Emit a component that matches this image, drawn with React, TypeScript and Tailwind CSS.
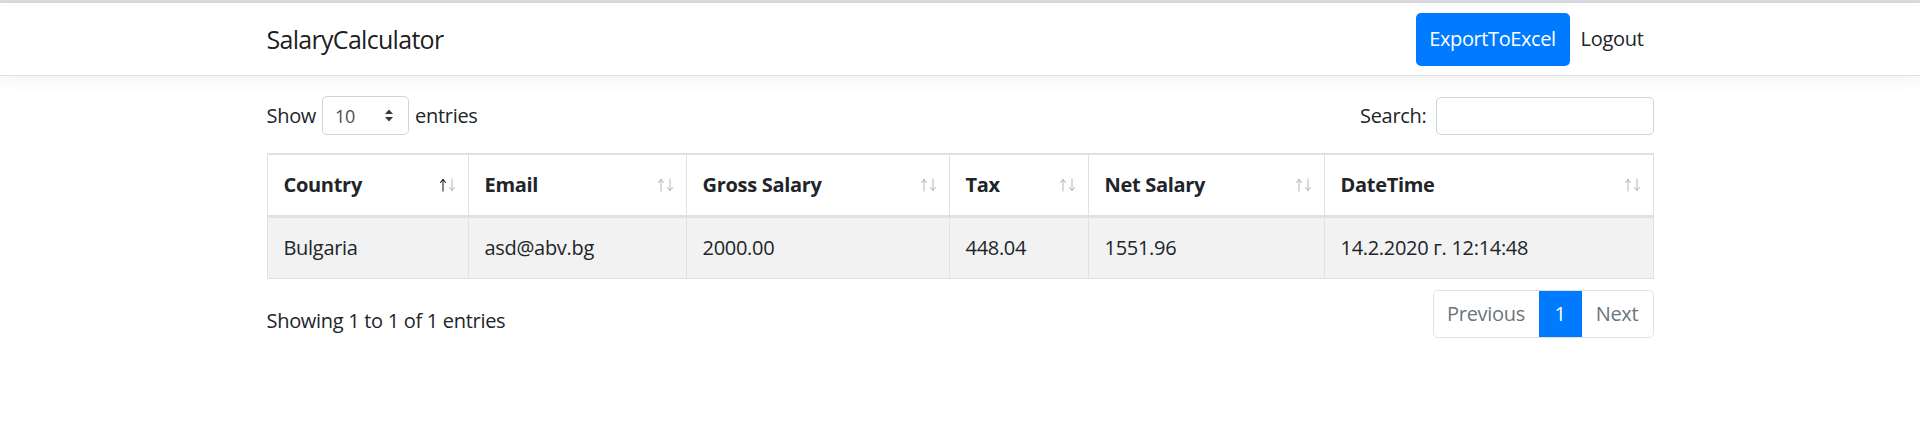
import React from "react";

const columns = [
  { label: "Country", width: "w-[201px]", active: true },
  { label: "Email", width: "w-[218px]", active: false },
  { label: "Gross Salary", width: "w-[263px]", active: false },
  { label: "Tax", width: "w-[139px]", active: false },
  { label: "Net Salary", width: "w-[236px]", active: false },
  { label: "DateTime", width: "w-[329px]", active: false },
];

const rows = [
  ["Bulgaria", "asd@abv.bg", "2000.00", "448.04", "1551.96", "14.2.2020 г. 12:14:48"],
];

function SortArrows({ active }: { active: boolean }) {
  return (
    <svg width="18" height="14" viewBox="0 0 18 14" fill="none" className="shrink-0">
      <g stroke="#212529" strokeWidth="1.1" strokeLinecap="round" strokeLinejoin="round">
        <g opacity={active ? 1 : 0.3}>
          <line x1="4" y1="13" x2="4" y2="1.5" />
          <polyline points="1.5,4.5 4,1.5 6.5,4.5" />
        </g>
        <g opacity="0.3">
          <line x1="13" y1="1" x2="13" y2="12.5" />
          <polyline points="10.5,9.5 13,12.5 15.5,9.5" />
        </g>
      </g>
    </svg>
  );
}

export default function App() {
  return (
    <div className="min-h-[426px] bg-white font-['Open_Sans',sans-serif] text-[20px] tracking-[-0.3px] text-[#212529]">
      {/* Navbar */}
      <div className="h-[3px] bg-[#dadbe0]" />
      <nav className="h-[73px] border-b border-[#dee2e6] bg-white shadow-[0_5px_15px_rgba(0,0,0,0.05)]">
        <div className="mx-auto flex h-full w-[1387px] items-center justify-between">
          <span className="text-[25px] leading-[37px] tracking-[-0.7px] text-black/90">SalaryCalculator</span>
          <div className="flex items-center">
            <button className="flex h-[53px] w-[154px] items-center justify-center rounded-[5px] bg-[#007bff] text-[20px] tracking-[-0.4px] text-white">
              ExportToExcel
            </button>
            <a className="ml-[11px] pr-[10px] text-[20px] text-[#212529]">Logout</a>
          </div>
        </div>
      </nav>

      <main className="mx-auto w-[1387px] pt-[20px]">
        {/* Length + search */}
        <div className="flex items-center justify-between">
          <label className="flex items-center gap-[6px]">
            <span>Show</span>
            <div className="flex h-[39px] w-[87px] items-center justify-between rounded-[5px] border border-[#ced4da] pl-[12px] pr-[14px]">
              <span className="text-[18px] leading-none text-[#495057]">10</span>
              <svg width="10" height="15" viewBox="0 0 10 15">
                <polygon points="1,6 5,1.5 9,6" fill="#343a40" />
                <polygon points="1,9 5,13.5 9,9" fill="#343a40" />
              </svg>
            </div>
            <span>entries</span>
          </label>
          <label className="flex items-center gap-[9px]">
            <span>Search:</span>
            <div className="h-[38px] w-[218px] rounded-[5px] border border-[#ced4da] bg-white" />
          </label>
        </div>

        {/* Table */}
        <table className="mt-[18px] w-[1387px] table-fixed border-collapse">
          <colgroup>
            {columns.map((c) => (
              <col key={c.label} className={c.width} />
            ))}
          </colgroup>
          <thead>
            <tr>
              {columns.map((c) => (
                <th
                  key={c.label}
                  className="border-x border-t-[2px] border-b-[3px] border-[#dee2e6] py-[15px] pl-[16px] pr-[11px] text-left font-bold leading-[30px]"
                >
                  <div className="flex items-center justify-between">
                    <span>{c.label}</span>
                    <SortArrows active={c.active} />
                  </div>
                </th>
              ))}
            </tr>
          </thead>
          <tbody>
            {rows.map((r, i) => (
              <tr key={i} className="bg-[#f2f2f2]">
                {r.map((v, j) => (
                  <td key={j} className="border border-[#dee2e6] py-[15px] pl-[16px] leading-[30px]">
                    {v}
                  </td>
                ))}
              </tr>
            ))}
          </tbody>
        </table>

        {/* Info + pagination */}
        <div className="mt-[11px] flex items-start justify-between">
          <div className="pt-[16px] leading-[30px]">Showing 1 to 1 of 1 entries</div>
          <div className="flex h-[48px] overflow-hidden rounded-[5px] border border-[#dee2e6]">
            <span className="flex w-[105px] items-center justify-center text-[#6c757d]">Previous</span>
            <span className="flex w-[43px] items-center justify-center bg-[#007bff] text-white">1</span>
            <span className="flex w-[71px] items-center justify-center text-[#6c757d]">Next</span>
          </div>
        </div>
      </main>
    </div>
  );
}
